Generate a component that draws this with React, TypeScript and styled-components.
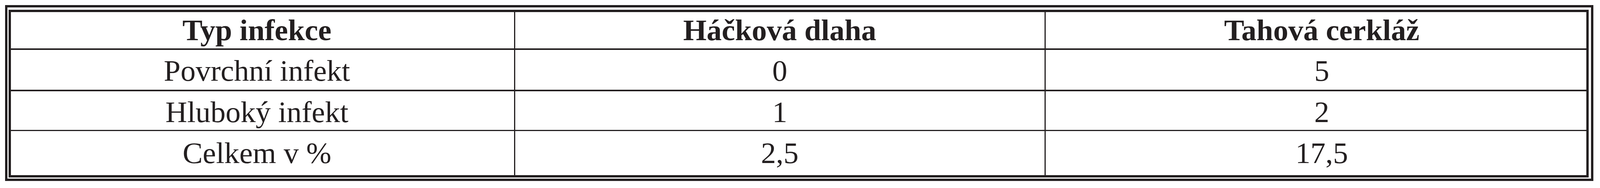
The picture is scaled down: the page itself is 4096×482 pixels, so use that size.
import React from 'react';
import styled, { createGlobalStyle } from 'styled-components';

const ink = '#231f20';

const GlobalStyle = createGlobalStyle`
  html, body {
    margin: 0;
    padding: 0;
    background: #ffffff;
  }
`;

const Page = styled.div`
  padding: 12.84px 0 0 12.84px;
`;

const OuterFrame = styled.div`
  display: inline-block;
  border: 6.42px solid ${ink};
  padding: 6.44px 6.44px 3.25px 3.2px;
`;

const InnerFrame = styled.div`
  border: 6.42px solid ${ink};
`;

const Grid = styled.div`
  display: grid;
  grid-template-columns: 1287.5px 1354.9px 1383.8px;
  grid-template-rows: 93.1px 102.8px 99.5px 112.4px;
  gap: 3.21px;
  background: ${ink};
`;

const Cell = styled.div<{ $col: number; $drop: number; $head?: boolean }>`
  background: #ffffff;
  display: flex;
  align-items: center;
  justify-content: center;
  box-sizing: border-box;
  padding-top: ${(p) => p.$drop}px;
  padding-right: ${(p) => (p.$col === 0 ? 28 : 0)}px;
  padding-left: ${(p) => (p.$col === 2 ? 30 : 0)}px;
  font-family: 'Liberation Serif', 'Times New Roman', serif;
  font-size: 77px;
  line-height: 1;
  font-weight: ${(p) => (p.$head ? 700 : 400)};
  color: ${ink};
  white-space: nowrap;
`;

const header = ['Typ infekce', 'Háčková dlaha', 'Tahová cerkláž'];

const rows = [
  { cells: ['Povrchní infekt', '0', '5'], drop: 6 },
  { cells: ['Hluboký infekt', '1', '2'], drop: 8 },
  { cells: ['Celkem v %', '2,5', '17,5'], drop: 0 },
];

function App(): JSX.Element {
  return (
    <>
      <GlobalStyle />
      <Page>
        <OuterFrame>
          <InnerFrame>
            <Grid>
              {header.map((text, i) => (
                <Cell key={text} $col={i} $drop={0} $head>
                  {text}
                </Cell>
              ))}
              {rows.map((row) =>
                row.cells.map((text, i) => (
                  <Cell key={row.cells[0] + i} $col={i} $drop={row.drop}>
                    {text}
                  </Cell>
                ))
              )}
            </Grid>
          </InnerFrame>
        </OuterFrame>
      </Page>
    </>
  );
}

export default App;
